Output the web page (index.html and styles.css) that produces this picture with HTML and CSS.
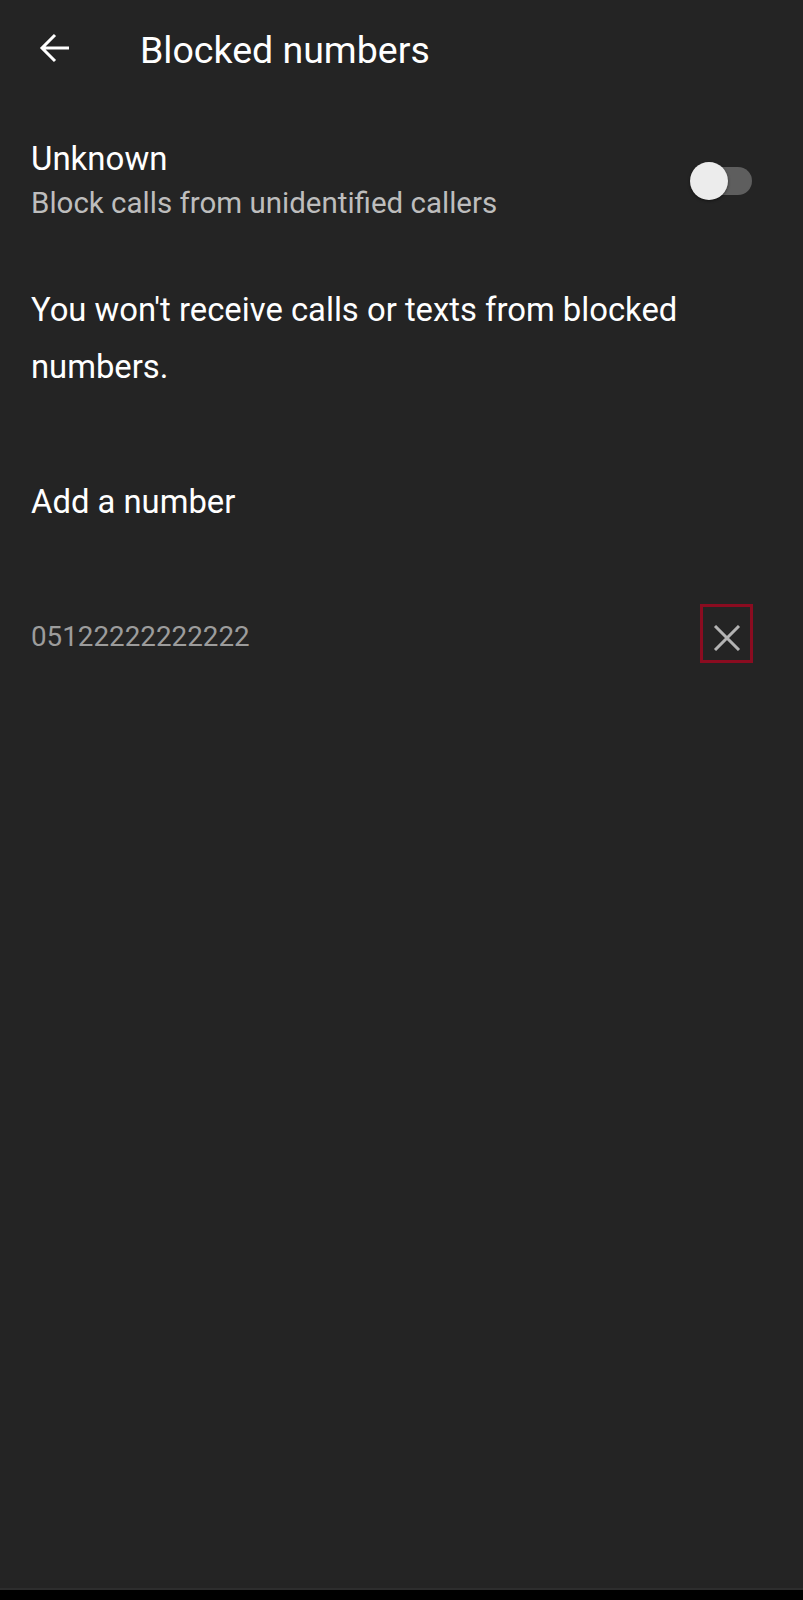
FILE: index.html
```html
<!DOCTYPE html>
<html lang="en">
<head>
<meta charset="utf-8">
<title>Blocked numbers</title>
<link rel="stylesheet" href="styles.css">
</head>
<body>
<div class="screen">
  <main class="content">
    <header class="appbar">
      <svg class="back" viewBox="0 0 32 32" width="32" height="32" aria-hidden="true">
        <path d="M30 16H3 M16 3 L3 16 L16 29" fill="none" stroke="#ffffff" stroke-width="3" stroke-linecap="butt" stroke-linejoin="miter"/>
      </svg>
      <h1 class="title">Blocked numbers</h1>
    </header>

    <section class="setting">
      <div class="setting-text">
        <div class="setting-title">Unknown</div>
        <div class="setting-sub">Block calls from unidentified callers</div>
      </div>
      <div class="switch">
        <span class="switch-track"></span>
        <span class="switch-thumb"></span>
      </div>
    </section>

    <p class="info">You won't receive calls or texts from blocked numbers.</p>

    <div class="add">Add a number</div>

    <div class="number-row">
      <span class="number">05122222222222</span>
      <button class="remove" aria-label="Unblock">
        <svg viewBox="0 0 28 26" width="28" height="26" aria-hidden="true">
          <path d="M2 1 L26 25 M26 1 L2 25" fill="none" stroke="#b3b3b3" stroke-width="3"/>
        </svg>
      </button>
    </div>
  </main>
  <div class="navbar"></div>
</div>
</body>
</html>
```

FILE: styles.css
```css
html, body {
  margin: 0;
  padding: 0;
  background: #242424;
}

body {
  font-family: Roboto, "Noto Sans", "Liberation Sans", sans-serif;
  color: #ffffff;
}

.screen {
  width: 803px;
  height: 1600px;
  display: flex;
  flex-direction: column;
  background: #242424;
}

.content {
  flex: 1;
  display: flex;
  flex-direction: column;
}

.appbar {
  display: flex;
  align-items: flex-start;
  padding: 28px 0 0 39px;
  height: 44px;
}

.back {
  display: block;
  margin-top: 4px;
}

.title {
  margin: 0 0 0 69px;
  font-size: 37.5px;
  font-weight: 400;
  line-height: 44px;
  color: #ffffff;
}

.setting {
  display: flex;
  align-items: center;
  justify-content: space-between;
  margin-top: 67px;
  padding: 0 51px 0 31px;
}

.setting-text {
  display: flex;
  flex-direction: column;
  gap: 6px;
}

.setting-title {
  font-size: 33px;
  line-height: 40px;
  color: #ffffff;
}

.setting-sub {
  font-size: 29.5px;
  line-height: 36px;
  color: #bdbdbd;
}

.switch {
  position: relative;
  width: 62px;
  height: 38px;
  margin-top: 2px;
}

.switch-track {
  position: absolute;
  right: 0;
  top: 5px;
  width: 55px;
  height: 28px;
  border-radius: 14px;
  background: #5e5e5e;
}

.switch-thumb {
  position: absolute;
  left: 0;
  top: 0;
  width: 38px;
  height: 38px;
  border-radius: 50%;
  background: #ececec;
  box-shadow: 0 1px 3px rgba(0, 0, 0, 0.5);
}

.info {
  margin: 61px 0 0 0;
  padding: 0 50px 0 31px;
  font-size: 32.8px;
  line-height: 57px;
  color: #ffffff;
}

.add {
  margin-top: 86px;
  padding-left: 31px;
  font-size: 32.8px;
  line-height: 40px;
  color: #ffffff;
}

.number-row {
  display: flex;
  align-items: flex-start;
  justify-content: space-between;
  margin-top: 82px;
  padding: 0 50px 0 31px;
}

.number {
  margin-top: 15px;
  font-size: 27.8px;
  line-height: 36px;
  color: #9c9c9c;
}

.remove {
  box-sizing: border-box;
  width: 53px;
  height: 59px;
  margin: 0;
  padding: 18px 0 0 0;
  border: 3px solid #8a0c20;
  background: transparent;
  display: flex;
  justify-content: center;
  align-items: flex-start;
}

.remove svg {
  display: block;
}

.navbar {
  height: 10px;
  background: #000000;
  border-top: 2px solid #2d2d2d;
}
```
